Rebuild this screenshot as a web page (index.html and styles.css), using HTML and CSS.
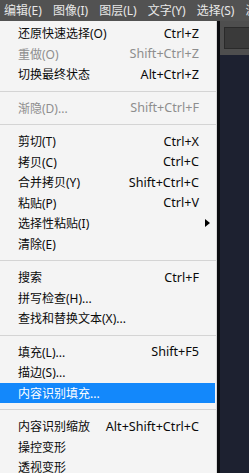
FILE: index.html
```html
<!DOCTYPE html>
<html lang="zh">
<head>
<meta charset="utf-8">
<link rel="stylesheet" href="styles.css">
</head>
<body>
<div class="menubar">
  <span class="mb-item active">编辑(E)</span>
  <span class="mb-item">图像(I)</span>
  <span class="mb-item">图层(L)</span>
  <span class="mb-item">文字(Y)</span>
  <span class="mb-item">选择(S)</span>
  <span class="mb-item">滤</span>
</div>
<div class="main">
  <div class="menu">
    <div class="item"><span class="label">还原快速选择(O)</span><span class="key">Ctrl+Z</span></div>
    <div class="item disabled"><span class="label">重做(O)</span><span class="key">Shift+Ctrl+Z</span></div>
    <div class="item"><span class="label">切换最终状态</span><span class="key">Alt+Ctrl+Z</span></div>
    <div class="sep"></div>
    <div class="item disabled"><span class="label">渐隐(D)...</span><span class="key">Shift+Ctrl+F</span></div>
    <div class="sep"></div>
    <div class="item"><span class="label">剪切(T)</span><span class="key">Ctrl+X</span></div>
    <div class="item"><span class="label">拷贝(C)</span><span class="key">Ctrl+C</span></div>
    <div class="item"><span class="label">合并拷贝(Y)</span><span class="key">Shift+Ctrl+C</span></div>
    <div class="item"><span class="label">粘贴(P)</span><span class="key">Ctrl+V</span></div>
    <div class="item"><span class="label">选择性粘贴(I)</span><span class="arrow"></span></div>
    <div class="item"><span class="label">清除(E)</span></div>
    <div class="sep"></div>
    <div class="item"><span class="label">搜索</span><span class="key">Ctrl+F</span></div>
    <div class="item"><span class="label">拼写检查(H)...</span></div>
    <div class="item"><span class="label">查找和替换文本(X)...</span></div>
    <div class="sep"></div>
    <div class="item"><span class="label">填充(L)...</span><span class="key">Shift+F5</span></div>
    <div class="item"><span class="label">描边(S)...</span></div>
    <div class="item selected"><span class="label">内容识别填充...</span></div>
    <div class="sep"></div>
    <div class="item"><span class="label">内容识别缩放</span><span class="key">Alt+Shift+Ctrl+C</span></div>
    <div class="item"><span class="label">操控变形</span></div>
    <div class="item"><span class="label">透视变形</span></div>
  </div>
  <div class="side">
    <div class="side-top"><div class="side-box"></div></div>
    <div class="side-rest"></div>
  </div>
</div>
</body>
</html>
```
FILE: styles.css
```css
html, body {
  margin: 0;
  padding: 0;
  width: 249px;
  height: 473px;
  overflow: hidden;
  background: #1c1f2b;
  font-family: "Noto Sans", "Noto Sans CJK SC", sans-serif;
  font-size: 12px;
}
.menubar {
  height: 21px;
  background: #525252;
  display: flex;
  align-items: center;
  gap: 11px;
  padding-left: 4px;
  white-space: nowrap;
  overflow: hidden;
}
.mb-item {
  color: #e8e8e8;
  line-height: 21px;
}
.main {
  display: flex;
  height: 452px;
}
.menu {
  width: 217px;
  flex: none;
  background: #f4f4f4;
  padding-top: 2px;
  box-sizing: border-box;
  border-right: 1px solid #d8d8d8;
}
.item {
  height: 20.5px;
  display: flex;
  align-items: center;
  padding-left: 18px;
  padding-right: 17px;
  color: #0a0a0a;
  position: relative;
}
.item .label { flex: 1; white-space: nowrap; }
.item .key { white-space: nowrap; font-size: 12.6px; }
.item.disabled { color: #8e8e8e; }
.item.selected {
  background: #1388fb;
  color: #fff;
  margin-right: 1px;
}
.arrow {
  width: 0;
  height: 0;
  border-top: 4px solid transparent;
  border-bottom: 4px solid transparent;
  border-left: 5px solid #000;
  margin-right: -11px;
}
.sep {
  height: 13px;
  display: flex;
  align-items: center;
}
.sep::after {
  content: "";
  display: block;
  width: 100%;
  height: 1px;
  background: #d4d4d4;
}
.side {
  flex: 1;
  display: flex;
  flex-direction: column;
  border-left: 3px solid #0b0c10;
}
.side-top {
  height: 34px;
  background: #4e4e4e;
  padding: 6px 0 6px 4px;
  box-sizing: border-box;
}
.side-box {
  height: 100%;
  background: #3a3a3a;
  border: 1px solid #2a2a2a;
  border-right: none;
  box-sizing: border-box;
}
.side-rest {
  flex: 1;
  background: #1d2130;
}
```
